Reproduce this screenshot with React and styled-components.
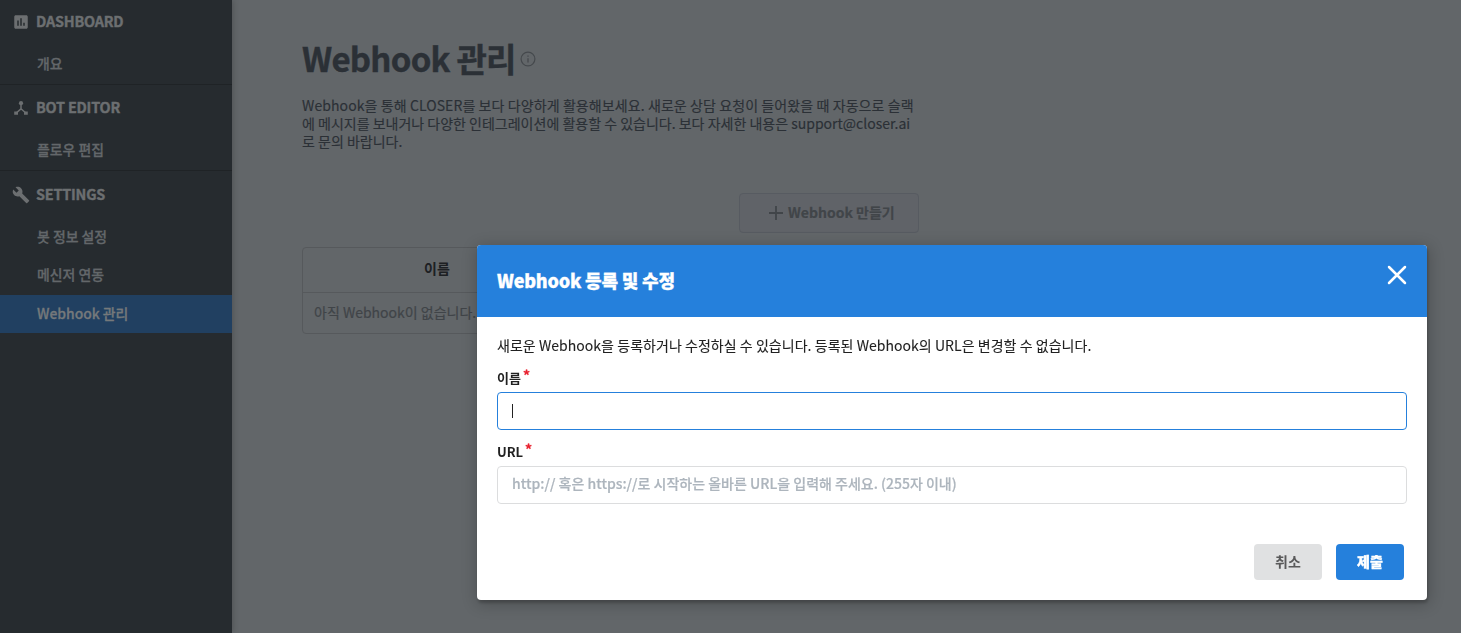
import React from 'react';
import styled, { createGlobalStyle } from 'styled-components';
import { MdAssessment, MdBuild } from 'react-icons/md';

const GlobalStyle = createGlobalStyle`
  * { box-sizing: border-box; }
  html, body { margin: 0; height: 100%; overflow: hidden; }
  body {
    background: #626669;
    font-family: "Noto Sans CJK KR", sans-serif;
    font-size: 14px;
    line-height: 18px;
  }
  h1, h2, p { margin: 0; }
`;

const Page = styled.div`
  display: flex;
  height: 633px;
`;

const Sidebar = styled.nav`
  flex: 0 0 232px;
  background: #262b2f;
  box-shadow: 1px 0 6px rgba(0, 0, 0, 0.2);
  color: #6c6f71;
`;

const Group = styled.section`
  border-bottom: ${(p) => (p.$last ? 'none' : '1px solid #1f2326')};
  padding-top: ${(p) => p.$top}px;
`;

const GroupTitle = styled.div`
  display: flex;
  align-items: center;
  height: 46px;
  padding: 0 0 2px 12px;
  gap: 6px;
  font-weight: 700;
  font-size: 14.4px;
  letter-spacing: -0.2px;
  -webkit-text-stroke: 0.4px currentColor;
  svg { flex: none; width: 18px; height: 18px; -webkit-text-stroke: 0; }
  span { padding-bottom: 2px; }
`;

const Item = styled.div`
  height: 38px;
  padding-left: 37px;
  line-height: ${(p) => (p.$active ? 36 : 35)}px;
  font-size: 13.9px;
  font-weight: 500;
  -webkit-text-stroke: 0.3px currentColor;
  color: ${(p) => (p.$active ? '#75797b' : '#63676a')};
  background: ${(p) => (p.$active ? '#214061' : 'transparent')};
`;

const Main = styled.main`
  width: 617px;
  margin-left: 70px;
  padding-top: 38px;
  color: #2b3036;
`;

const TitleRow = styled.div`
  display: flex;
  align-items: center;
  height: 42px;
  gap: 4px;
  svg { flex: none; }
`;

const Title = styled.h1`
  height: 42px;
  font-size: 33px;
  line-height: 40px;
  font-weight: 700;
  letter-spacing: -0.75px;
  white-space: nowrap;
  -webkit-text-stroke: 0.4px currentColor;
`;

const Intro = styled.p`
  margin-top: 16px;
  font-size: 14px;
  line-height: 18px;
  white-space: nowrap;
  -webkit-text-stroke: 0.15px currentColor;
`;

const IntroLine = styled.span`
  display: block;
  letter-spacing: ${(p) => p.$spacing || 0}px;
`;

const Actions = styled.div`
  display: flex;
  justify-content: flex-end;
  margin-top: 43px;
`;

const CreateButton = styled.div`
  display: flex;
  align-items: center;
  gap: 4px;
  width: 180px;
  height: 40px;
  padding-left: 28px;
  border: 1px solid #575b61;
  border-radius: 4px;
  background: #606368;
  color: #414549;
  font-weight: 700;
  white-space: nowrap;
  span { padding-bottom: 2px; -webkit-text-stroke: 0.2px currentColor; }
`;

const Table = styled.div`
  margin-top: 14px;
  border: 1px solid #56595c;
  border-radius: 4px;
`;

const TableHead = styled.div`
  width: 268px;
  height: 44px;
  line-height: 41px;
  text-align: center;
  font-size: 14px;
  font-weight: 700;
  color: #1d2023;
`;

const TableRow = styled.div`
  height: 41px;
  padding-left: 11px;
  border-top: 1px solid #56595c;
  line-height: 38px;
  color: #404448;
  -webkit-text-stroke: 0.2px currentColor;
`;

const Modal = styled.div`
  position: fixed;
  top: 245px;
  left: 477px;
  width: 950px;
  height: 355px;
  border-radius: 4px;
  overflow: hidden;
  background: #fff;
  box-shadow: 1px 3px 3px rgba(0, 0, 0, 0.2), 1px 3px 15px 2px rgba(0, 0, 0, 0.2);
  color: #212121;
`;

const ModalHeader = styled.header`
  display: flex;
  justify-content: space-between;
  height: 72px;
  padding: 20px 20px 0;
  background: #2580dc;
  color: #fff;
  svg { flex: none; }
`;

const ModalTitle = styled.h2`
  font-size: 18px;
  line-height: 30px;
  font-weight: 900;
  letter-spacing: -0.2px;
  -webkit-text-stroke: 0.3px currentColor;
`;

const ModalBody = styled.div`
  padding: 19px 20px 0;
`;

const Description = styled.p`
  letter-spacing: 0.04px;
  -webkit-text-stroke: 0.1px currentColor;
`;

const Field = styled.div`
  margin-top: ${(p) => p.$gap}px;
`;

const Label = styled.div`
  display: flex;
  height: 20px;
  line-height: ${(p) => p.$line || 20}px;
  gap: 3px;
  font-size: 13px;
  font-weight: 700;
`;

const Required = styled.span`
  margin-left: -1px;
  color: #e8202e;
  font-size: 14px;
  line-height: 15px;
  -webkit-text-stroke: 0.3px currentColor;
`;

const InputBox = styled.div`
  display: flex;
  align-items: center;
  height: 38px;
  margin-top: 4px;
  padding: 0 14px ${(p) => (p.$focus ? 0 : 4)}px;
  border: 1px solid ${(p) => (p.$focus ? '#2580dc' : '#dcddde')};
  border-radius: 4px;
  color: #adb5bd;
  font-weight: 500;
  -webkit-text-stroke: 0.2px currentColor;
`;

const Caret = styled.span`
  width: 1px;
  height: 14px;
  background: #222;
`;

const Footer = styled.footer`
  display: flex;
  justify-content: flex-end;
  gap: 14px;
  margin-top: 40px;
  padding-right: 3px;
`;

const Button = styled.div`
  width: 68px;
  height: 36px;
  border-radius: 4px;
  line-height: 34px;
  text-align: center;
  font-size: 14px;
  font-weight: ${(p) => (p.$primary ? 900 : 700)};
  -webkit-text-stroke: ${(p) => (p.$primary ? 0.3 : 0)}px currentColor;
  background: ${(p) => (p.$primary ? '#2580dc' : '#e0e1e2')};
  color: ${(p) => (p.$primary ? '#fff' : '#5a5a5b')};
`;

const FlowIcon = () => (
  <svg viewBox="0 0 18 18" fill="none">
    <circle cx="9" cy="4.2" r="2.1" fill="currentColor" />
    <path d="M9 5v4.8L4.2 14M9 9.8l4.8 4.2" stroke="currentColor" strokeWidth="1.5" />
    <path d="M2.2 12.4h3.8v3.4H2.2zM12 12.4h3.8v3.4H12z" fill="currentColor" />
  </svg>
);

const InfoIcon = () => (
  <svg width="16" height="16" viewBox="0 0 16 16" fill="none">
    <circle cx="8" cy="8" r="6.9" stroke="#45494d" strokeWidth="1.2" />
    <path d="M8 7.2v4.2M8 4.5v1.3" stroke="#45494d" strokeWidth="1.3" />
  </svg>
);

const PlusIcon = () => (
  <svg width="16" height="16" viewBox="0 0 16 16">
    <path d="M8 1v14M1 8h14" stroke="currentColor" strokeWidth="1.8" />
  </svg>
);

const CloseIcon = () => (
  <svg width="20" height="20" viewBox="0 0 20 20">
    <path d="M2 2l16 16M18 2L2 18" stroke="#fff" strokeWidth="2.5" strokeLinecap="round" />
  </svg>
);

const NAV = [
  { title: 'DASHBOARD', Icon: MdAssessment, top: 0, items: ['개요'] },
  { title: 'BOT EDITOR', Icon: FlowIcon, top: 1, items: ['플로우 편집'] },
  { title: 'SETTINGS', Icon: MdBuild, top: 2, items: ['봇 정보 설정', '메신저 연동', 'Webhook 관리'] },
];

export default function App() {
  return (
    <>
      <GlobalStyle />
      <Page>
        <Sidebar>
          {NAV.map(({ title, Icon, top, items }, i) => (
            <Group key={title} $top={top} $last={i === NAV.length - 1}>
              <GroupTitle><Icon /><span>{title}</span></GroupTitle>
              {items.map((item) => (
                <Item key={item} $active={item === 'Webhook 관리'}>{item}</Item>
              ))}
            </Group>
          ))}
        </Sidebar>
        <Main>
          <TitleRow><Title>Webhook 관리</Title><InfoIcon /></TitleRow>
          <Intro>
            <IntroLine $spacing={0.09}>Webhook을 통해 CLOSER를 보다 다양하게 활용해보세요. 새로운 상담 요청이 들어왔을 때 자동으로 슬랙</IntroLine>
            <IntroLine>에 메시지를 보내거나 다양한 인테그레이션에 활용할 수 있습니다. 보다 자세한 내용은 support@closer.ai</IntroLine>
            <IntroLine>로 문의 바랍니다.</IntroLine>
          </Intro>
          <Actions><CreateButton><PlusIcon /><span>Webhook 만들기</span></CreateButton></Actions>
          <Table>
            <TableHead>이름</TableHead>
            <TableRow>아직 Webhook이 없습니다.</TableRow>
          </Table>
        </Main>
      </Page>
      <Modal>
        <ModalHeader><ModalTitle>Webhook 등록 및 수정</ModalTitle><CloseIcon /></ModalHeader>
        <ModalBody>
          <Description>새로운 Webhook을 등록하거나 수정하실 수 있습니다. 등록된 Webhook의 URL은 변경할 수 없습니다.</Description>
          <Field $gap={14}>
            <Label $line={19}>이름<Required>*</Required></Label>
            <InputBox $focus><Caret /></InputBox>
          </Field>
          <Field $gap={12}>
            <Label>URL<Required>*</Required></Label>
            <InputBox>http:// 혹은 https://로 시작하는 올바른 URL을 입력해 주세요. (255자 이내)</InputBox>
          </Field>
          <Footer><Button>취소</Button><Button $primary>제출</Button></Footer>
        </ModalBody>
      </Modal>
    </>
  );
}
